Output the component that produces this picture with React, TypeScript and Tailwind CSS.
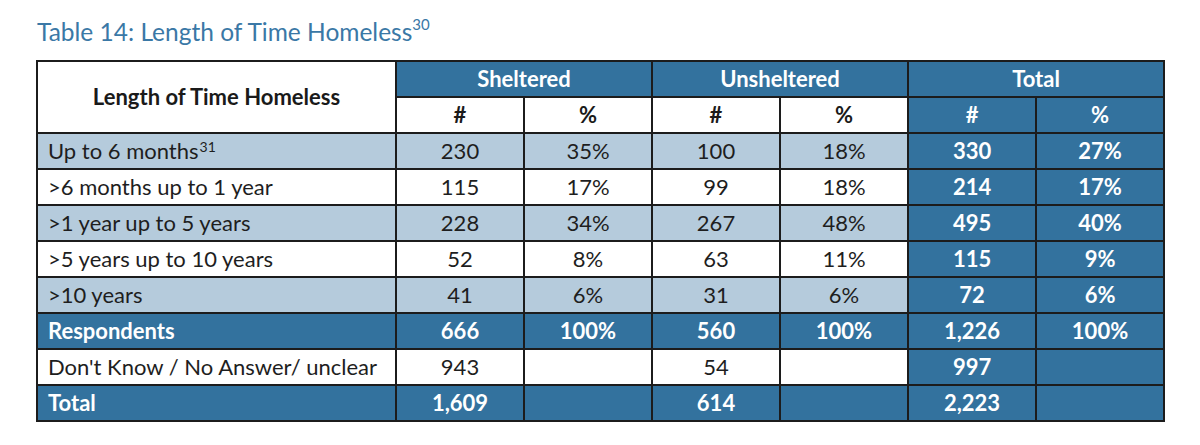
import React from "react";

type Row = {
  label: string;
  sup?: string;
  vals: string[]; // sh#, sh%, un#, un%, tot#, tot%
  kind: "light" | "white" | "dark";
};

const rows: Row[] = [
  { label: "Up to 6 months", sup: "31", vals: ["230", "35%", "100", "18%", "330", "27%"], kind: "light" },
  { label: ">6 months up to 1 year", vals: ["115", "17%", "99", "18%", "214", "17%"], kind: "white" },
  { label: ">1 year up to 5 years", vals: ["228", "34%", "267", "48%", "495", "40%"], kind: "light" },
  { label: ">5 years up to 10 years", vals: ["52", "8%", "63", "11%", "115", "9%"], kind: "white" },
  { label: ">10 years", vals: ["41", "6%", "31", "6%", "72", "6%"], kind: "light" },
  { label: "Respondents", vals: ["666", "100%", "560", "100%", "1,226", "100%"], kind: "dark" },
  { label: "Don't Know / No Answer/ unclear", vals: ["943", "", "54", "", "997", ""], kind: "white" },
  { label: "Total", vals: ["1,609", "", "614", "", "2,223", ""], kind: "dark" },
];

const cell = "border-2 border-[#1c1c1c] h-[36px] p-0";

export default function App() {
  return (
    <div
      className="w-[1200px] h-[445px] bg-white"
      style={{ fontFamily: "Lato, 'Open Sans', sans-serif" }}
    >
      <div className="pl-[37px] pt-[17px]">
        <h1 className="text-[24.5px] leading-[30px] text-[#3a78a6] font-normal">
          Table 14: Length of Time Homeless
          <sup className="text-[15px] align-[4px] leading-none">30</sup>
        </h1>
      </div>
      <table className="ml-[36px] mt-[13px] border-collapse table-fixed w-[1127px] text-[22px] leading-none">
        <colgroup>
          <col className="w-[359px]" />
          <col className="w-[128px]" />
          <col className="w-[128px]" />
          <col className="w-[128px]" />
          <col className="w-[128px]" />
          <col className="w-[128px]" />
          <col className="w-[128px]" />
        </colgroup>
        <thead>
          <tr>
            <th rowSpan={2} className={`${cell} bg-white text-[#1a1a1a] font-bold text-center`}>
              Length of Time Homeless
            </th>
            <th colSpan={2} className={`${cell} bg-[#33729e] text-white font-bold text-center`}>
              Sheltered
            </th>
            <th colSpan={2} className={`${cell} bg-[#33729e] text-white font-bold text-center`}>
              Unsheltered
            </th>
            <th colSpan={2} className={`${cell} bg-[#33729e] text-white font-bold text-center`}>
              Total
            </th>
          </tr>
          <tr>
            <th className={`${cell} bg-white text-[#1a1a1a] font-bold`}>#</th>
            <th className={`${cell} bg-white text-[#1a1a1a] font-bold`}>%</th>
            <th className={`${cell} bg-white text-[#1a1a1a] font-bold`}>#</th>
            <th className={`${cell} bg-white text-[#1a1a1a] font-bold`}>%</th>
            <th className={`${cell} bg-[#33729e] text-white font-bold`}>#</th>
            <th className={`${cell} bg-[#33729e] text-white font-bold`}>%</th>
          </tr>
        </thead>
        <tbody>
          {rows.map((r) => {
            const dark = r.kind === "dark";
            const bg = dark ? "bg-[#33729e]" : r.kind === "light" ? "bg-[#b5cbdc]" : "bg-white";
            const txt = dark ? "text-white font-bold" : "text-[#1e1e1e]";
            return (
              <tr key={r.label}>
                <td className={`${cell} ${bg} ${txt} text-left pl-[10px]`}>
                  {r.label}
                  {r.sup && <sup className="text-[14px] leading-none ml-[1px]">{r.sup}</sup>}
                </td>
                {r.vals.map((v, i) => {
                  const total = i >= 4;
                  return (
                    <td
                      key={i}
                      className={`${cell} text-center ${
                        total ? "bg-[#33729e] text-white font-bold" : `${bg} ${txt}`
                      }`}
                    >
                      {v}
                    </td>
                  );
                })}
              </tr>
            );
          })}
        </tbody>
      </table>
    </div>
  );
}
